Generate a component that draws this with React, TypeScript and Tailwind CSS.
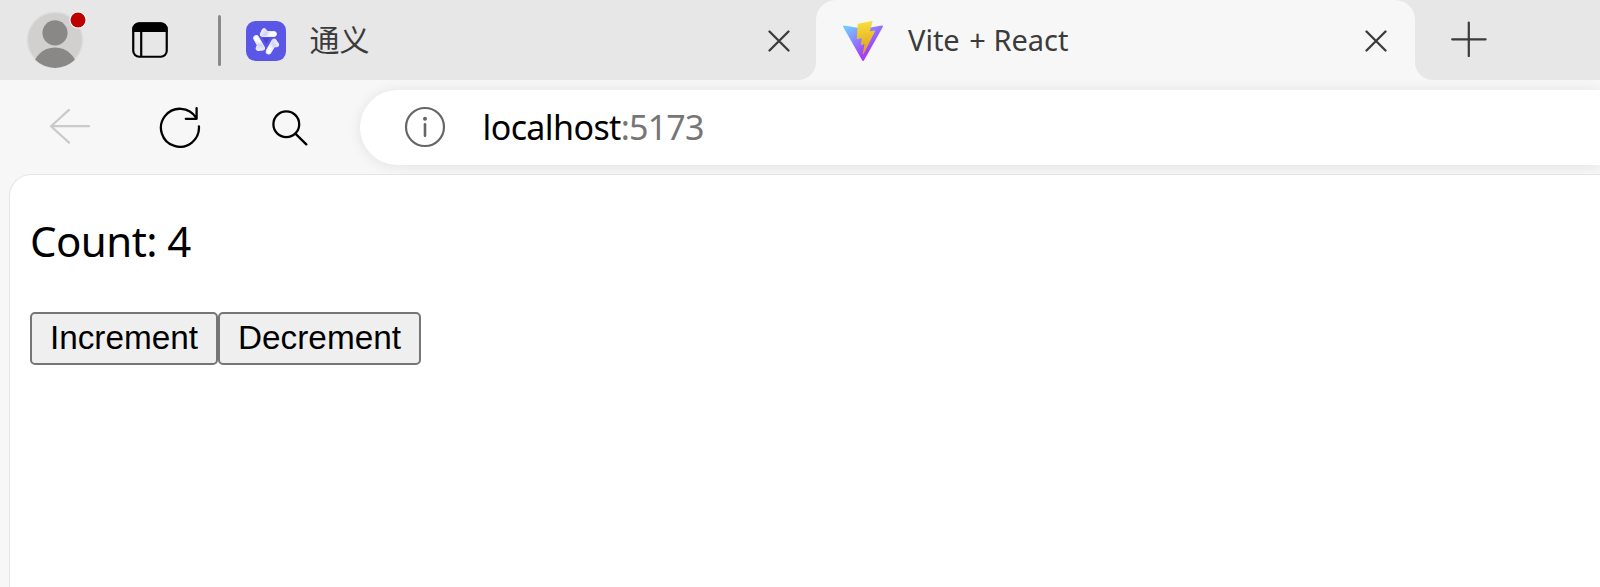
import { useState } from "react";

const uiFont = "font-['Noto_Sans','Noto_Sans_CJK_SC',sans-serif]";

function Avatar() {
  return (
    <svg className="ml-[26px] h-[60px] w-[62px] shrink-0" viewBox="0 0 62 60">
      <defs>
        <clipPath id="face"><circle cx="29" cy="30" r="28" /></clipPath>
      </defs>
      <circle cx="29" cy="30" r="27.7" fill="#d2d0ce" stroke="#dedede" strokeWidth="1.5" />
      <g clipPath="url(#face)" fill="#8a8886">
        <circle cx="29" cy="22.8" r="12.6" />
        <ellipse cx="29" cy="58.5" rx="22" ry="21" />
      </g>
      <circle cx="52" cy="10" r="8.6" fill="#fff" />
      <circle cx="52" cy="10" r="7.5" fill="#bc0000" />
    </svg>
  );
}

function TabActions() {
  return (
    <svg className="ml-[44px] h-9 w-9 shrink-0" viewBox="0 0 36 36">
      <rect x="1.25" y="1.25" width="33.5" height="33.5" rx="6" fill="none" stroke="#000" strokeWidth="2.2" />
      <path d="M0.5 10V7a6.5 6.5 0 0 1 6.5-6.5h22a6.5 6.5 0 0 1 6.5 6.5v3z" />
      <path d="M9.2 9v25" stroke="#000" strokeWidth="2.2" />
    </svg>
  );
}

function TongyiLogo() {
  return (
    <svg className="mt-0.5 ml-[25px] h-10 w-10 shrink-0" viewBox="0 0 40 40">
      <defs>
        <linearGradient id="arm" x1="0" y1="0" x2="1" y2="0.3">
          <stop offset="0" stopColor="#fff" />
          <stop offset="0.5" stopColor="#d0d0f8" />
          <stop offset="0.8" stopColor="#fff" />
        </linearGradient>
      </defs>
      <rect width="40" height="40" rx="9.5" fill="#5b57e6" />
      {[0, 120, 240].map((angle) => (
        <path
          key={angle}
          transform={`rotate(${angle} 20.3 20.2)`}
          d="M16.5 8.2q1.8-1.7 3.4.2l1.4 2.1h7.1q2.1.3 2.1 2.5t-2.1 2.5H16.3q-2.6-.3-2-2.6z"
          fill="url(#arm)"
          stroke="#f1f1ff"
          strokeWidth="0.9"
          strokeLinejoin="round"
        />
      ))}
      <path d="M16.8 16.8h7l-3.5 6.3z" fill="#4a45cf" />
    </svg>
  );
}

function ViteLogo() {
  return (
    <svg className="mt-0.5 ml-[27px] h-10 w-10 shrink-0" viewBox="0 0 256 257">
      <defs>
        <linearGradient id="shield" x1="-0.8%" x2="57.6%" y1="7.7%" y2="78.4%">
          <stop offset="0" stopColor="#6fd0ff" />
          <stop offset="1" stopColor="#a43cff" />
        </linearGradient>
        <linearGradient id="bolt" x1="43.4%" x2="50.3%" y1="2.2%" y2="89%">
          <stop offset="0" stopColor="#f8df3c" />
          <stop offset="1" stopColor="#dfa31c" />
        </linearGradient>
      </defs>
      <path fill="url(#shield)" d="M255.153 37.938L134.897 252.976c-2.483 4.44-8.862 4.466-11.382.048L.875 37.958c-2.746-4.814 1.371-10.646 6.827-9.67l120.385 21.517a6.537 6.537 0 0 0 2.322-.004l117.867-21.483c5.438-.991 9.574 4.796 6.877 9.62Z" />
      <path fill="url(#bolt)" d="M185.432.063L96.44 17.501a3.268 3.268 0 0 0-2.634 3.014l-5.474 92.456a3.268 3.268 0 0 0 3.997 3.378l24.777-5.718c2.318-.535 4.413 1.507 3.936 3.838l-7.361 36.047c-.495 2.426 1.782 4.5 4.151 3.78l15.304-4.649c2.372-.72 4.652 1.36 4.15 3.788l-11.698 56.621c-.732 3.542 3.979 5.473 5.943 2.437l1.313-2.028l72.516-144.72c1.215-2.423-.88-5.186-3.54-4.672l-25.505 4.922c-2.396.462-4.435-1.77-3.759-4.114l16.646-57.705c.677-2.35-1.37-4.583-3.769-4.113Z" />
    </svg>
  );
}

function CloseIcon() {
  return (
    <svg className="mt-0.5 h-[22px] w-[22px]" viewBox="0 0 22 22" stroke="#3b3b3b" strokeWidth="2.3" strokeLinecap="round">
      <path d="M1.5 1.5l19 19M20.5 1.5l-19 19" />
    </svg>
  );
}

function TabStrip() {
  return (
    <header className="flex h-20 shrink-0 bg-[#f7f7f7] text-[#3b3b3b]">
      <div className="flex w-[816px] shrink-0 items-center rounded-br-[18px] bg-[#e7e7e7]">
        <Avatar />
        <TabActions />
        <div className="mt-px ml-[49.5px] h-[51px] w-[3px] rounded-full bg-[#8a8a8a]" />
        <TongyiLogo />
        <span className={`${uiFont} ml-[24px] text-[30px] leading-10`}>通义</span>
        <button className="mr-[26px] ml-auto"><CloseIcon /></button>
      </div>
      <div className="w-[599px] shrink-0 bg-[#e7e7e7]">
        <div className="flex h-full items-center rounded-t-[20px] bg-[#f7f7f7]">
          <ViteLogo />
          <span className={`${uiFont} mb-px ml-[25px] text-[29px] leading-10`}>
            Vite <span className="ml-[2px]">+</span> React
          </span>
          <button className="mr-[28px] ml-auto"><CloseIcon /></button>
        </div>
      </div>
      <div className="flex grow items-center rounded-bl-[18px] bg-[#e7e7e7] pl-9">
        <svg className="mb-[3px] h-9 w-9" viewBox="0 0 36 36" stroke="#3b3b3b" strokeWidth="2.2" strokeLinecap="round">
          <path d="M1.2 18.3h33.4M17.8 1.6V35" />
        </svg>
      </div>
    </header>
  );
}

function Toolbar() {
  return (
    <nav className="flex h-[94px] shrink-0 items-center overflow-hidden bg-[#f7f7f7]">
      <svg className="ml-[49px] h-9 w-[42px] shrink-0" viewBox="0 0 42 36" fill="none" stroke="#cacaca" strokeWidth="2.2" strokeLinecap="round" strokeLinejoin="round">
        <path d="M40 17.2H2M20 .9L2 17.2 20 33.6" />
      </svg>
      <svg className="ml-[68px] h-[42px] w-[42px] shrink-0" viewBox="0 0 42 42" fill="none" stroke="#000" strokeWidth="2.3" strokeLinecap="round" strokeLinejoin="round">
        <path d="M39.9 20.3A19 19 0 1 1 37.2 11.9M37.6 2.2v10.6H26.8" />
      </svg>
      <svg className="mt-px ml-[71px] h-9 w-9 shrink-0" viewBox="0 0 36 36" fill="none" stroke="#000" strokeWidth="2.3" strokeLinecap="round">
        <circle cx="14.3" cy="14.2" r="12.9" />
        <path d="M23.6 23.9l10.7 10.5" />
      </svg>
      <div className="mt-px ml-[52px] flex h-[75px] grow items-center rounded-l-full bg-white shadow-[0_1px_14px_rgba(0,0,0,0.09)]">
        <svg className="mb-px ml-[44px] h-[42px] w-[42px] shrink-0" viewBox="0 0 42 42" fill="none" stroke="#666" strokeWidth="2.2" strokeLinecap="round">
          <circle cx="21" cy="21" r="19" />
          <path d="M21 18.3v11.5" strokeWidth="2.6" />
          <circle cx="21" cy="12.8" r="2" fill="#666" stroke="none" />
        </svg>
        <span className={`${uiFont} mb-0.5 ml-[36.5px] text-[34px] leading-[44px] text-black`}>
          <span className="tracking-[-0.6px]">localhost</span>
          <span className="tracking-[-0.8px] text-[#767676]">:5173</span>
        </span>
      </div>
    </nav>
  );
}

function Counter() {
  const [count, setCount] = useState(4);
  const button = "flex h-[53px] justify-center rounded-[5px] border-2 border-[#767676] bg-[#efefef] pt-[5px] font-['Liberation_Sans',sans-serif] text-[33.33px] leading-[38px] whitespace-nowrap text-black";
  return (
    <main className="ml-[9px] flex grow flex-col rounded-tl-[22px] border-t border-l border-[#e5e5e5] bg-white pl-5">
      <p className={`${uiFont} mt-[39px] text-[42px] leading-[54px] tracking-[-0.55px] text-black`}>Count: {count}</p>
      <div className="mt-[44px] flex">
        <button className={`${button} w-[188px]`} onClick={() => setCount(count + 1)}>Increment</button>
        <button className={`${button} w-[203px]`} onClick={() => setCount(count - 1)}>Decrement</button>
      </div>
    </main>
  );
}

export default function App() {
  return (
    <div className="flex h-[587px] w-[1600px] flex-col overflow-hidden bg-[#f7f7f7]">
      <TabStrip />
      <Toolbar />
      <Counter />
    </div>
  );
}
